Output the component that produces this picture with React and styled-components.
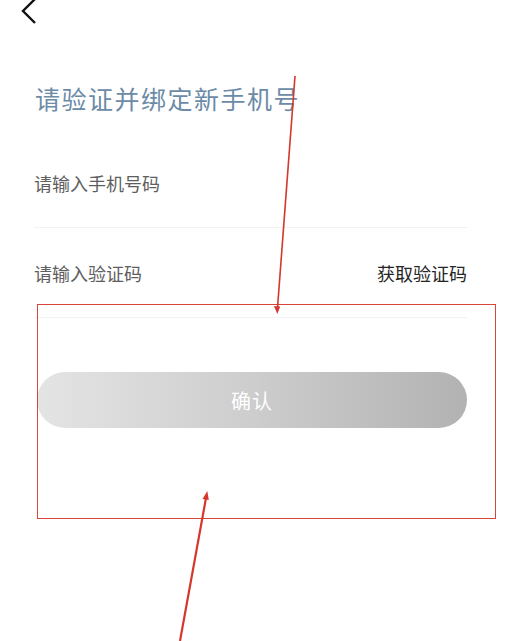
import React from 'react';
import styled, { createGlobalStyle } from 'styled-components';

const GlobalStyle = createGlobalStyle`
    body {
        margin: 0;
        background: #ffffff;
        font-family: "Noto Sans CJK SC", "Noto Sans", sans-serif;
    }
`;

const Page = styled.div`
    position: relative;
    width: 525px;
    height: 641px;
    overflow: hidden;
    background: #ffffff;
`;

const Header = styled.div`
    height: 24px;
    display: flex;
    align-items: flex-start;
    padding-left: 20px;
`;

const Content = styled.div`
    display: flex;
    flex-direction: column;
    padding: 0 58px 0 34px;
`;

const Title = styled.h1`
    margin: 56px 0 22px 1px;
    font-size: 25px;
    line-height: 36px;
    font-weight: 400;
    letter-spacing: 1.5px;
    color: #6c8ba7;
`;

const Field = styled.div`
    height: 89px;
    display: flex;
    align-items: center;
    justify-content: space-between;
    border-bottom: 1px solid #f2f2f2;
`;

const Placeholder = styled.span`
    font-size: 18px;
    color: #5e5e5e;
`;

const CodeLink = styled.span`
    font-size: 18px;
    color: #262626;
`;

const ConfirmButton = styled.button`
    margin: 54px 0 0 3px;
    height: 56px;
    border: none;
    border-radius: 28px;
    background: linear-gradient(90deg, #e4e4e4 0%, #cdcdcd 50%, #b2b2b2 100%);
    color: #ffffff;
    font-family: inherit;
    font-size: 20px;
    letter-spacing: 1px;
`;

const Highlight = styled.div`
    position: absolute;
    left: 37px;
    top: 304px;
    width: 457px;
    height: 213px;
    border: 1.5px solid #d8463b;
    pointer-events: none;
`;

const Arrows = styled.svg`
    position: absolute;
    left: 0;
    top: 0;
    pointer-events: none;
`;

const App = () => {
    return (
        <>
            <GlobalStyle />
            <Page>
                <Header>
                    <svg width="20" height="24" viewBox="0 0 20 24">
                        <path d="M15 -1 L3 11 L15 23" fill="none" stroke="#111" strokeWidth="2.4" />
                    </svg>
                </Header>
                <Content>
                    <Title>请验证并绑定新手机号</Title>
                    <Field>
                        <Placeholder>请输入手机号码</Placeholder>
                    </Field>
                    <Field>
                        <Placeholder>请输入验证码</Placeholder>
                        <CodeLink>获取验证码</CodeLink>
                    </Field>
                    <ConfirmButton>确认</ConfirmButton>
                </Content>
                <Highlight />
                <Arrows width="525" height="641" viewBox="0 0 525 641">
                    <line x1="295" y1="76" x2="277.5" y2="308" stroke="#d4382c" strokeWidth="1.6" />
                    <path d="M274 306 L277.3 314 L280.2 306.5 Z" fill="#d4382c" />
                    <line x1="180" y1="641" x2="206" y2="498" stroke="#d4382c" strokeWidth="2.2" />
                    <path d="M202.5 499 L207.3 491 L208.8 500 Z" fill="#d4382c" />
                </Arrows>
            </Page>
        </>
    );
};

export default App;
